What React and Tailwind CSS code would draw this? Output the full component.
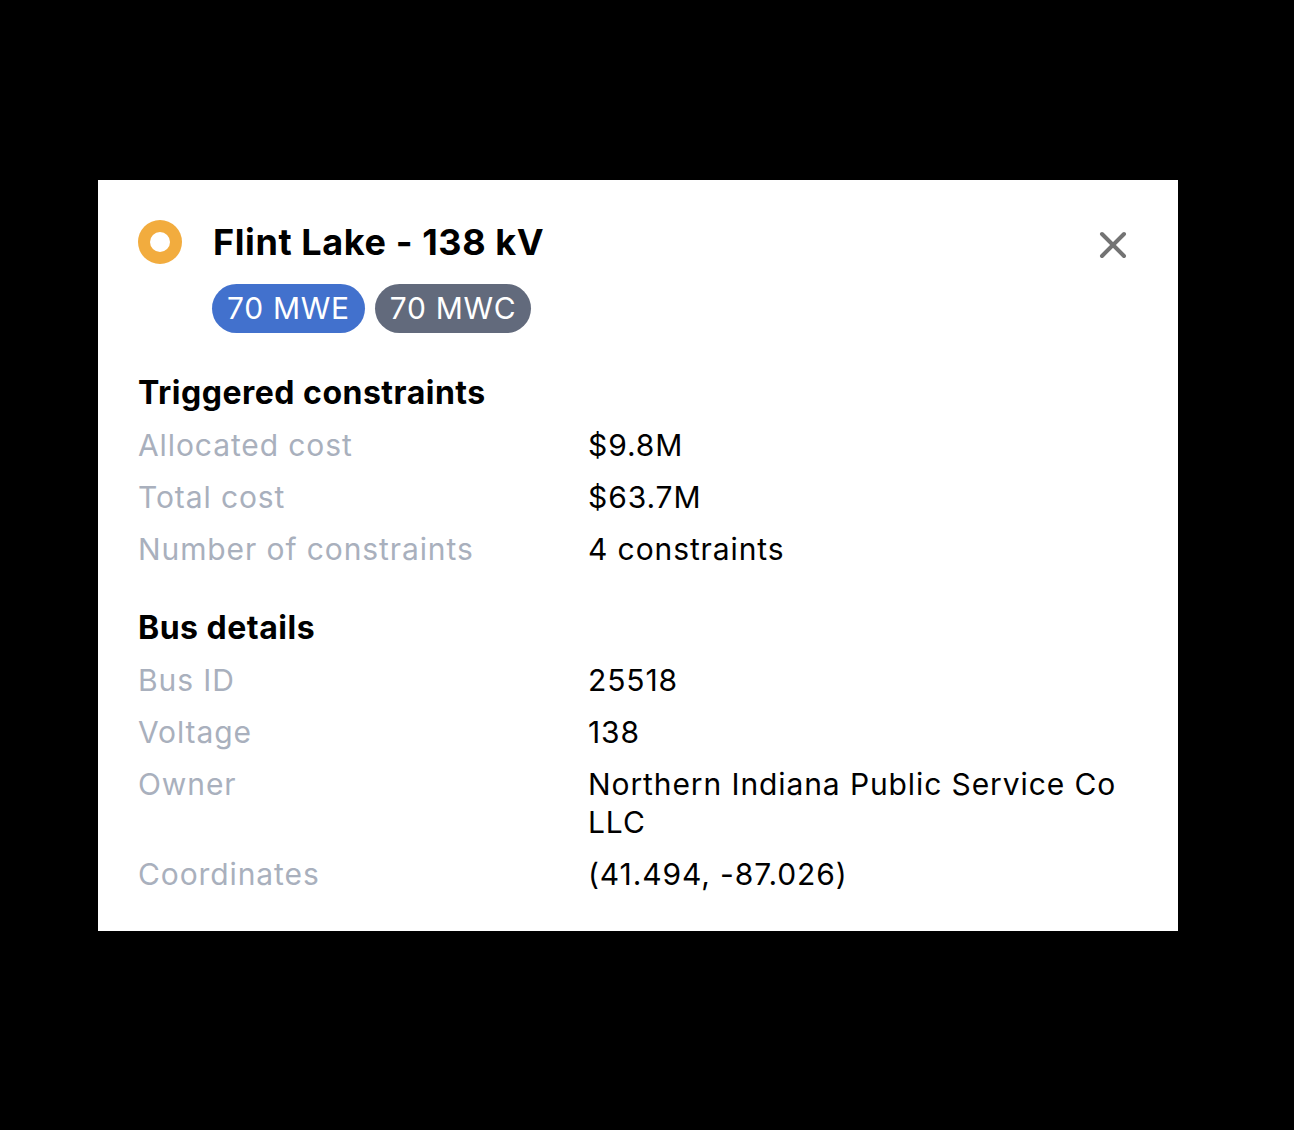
import React from 'react';

const sections = [
  {
    title: 'Triggered constraints',
    rows: [
      ['Allocated cost', '$9.8M'],
      ['Total cost', '$63.7M'],
      ['Number of constraints', '4 constraints'],
    ],
  },
  {
    title: 'Bus details',
    rows: [
      ['Bus ID', '25518'],
      ['Voltage', '138'],
      ['Owner', 'Northern Indiana Public Service Co LLC'],
      ['Coordinates', '(41.494, -87.026)'],
    ],
  },
];

const App = () => {
  return (
    <div
      className="min-h-[1130px] w-full bg-black pl-[98px] pt-[180px]"
      style={{ fontFamily: 'Inter, "Noto Sans", sans-serif' }}
    >
      <div className="w-[1080px] bg-white px-[40px] pt-[40px] pb-[38px]">
        {/* Header */}
        <div className="flex items-start justify-between">
          <div className="flex items-start gap-[31px]">
            <div className="flex h-[44px] w-[44px] items-center justify-center rounded-full bg-[#f2ac3e]">
              <div className="h-[20px] w-[20px] rounded-full bg-white" />
            </div>
            <div className="flex flex-col">
              <h1 className="text-[36px] font-bold leading-[44px] tracking-[0.6px] text-black">
                Flint Lake - 138 kV
              </h1>
              <div className="mt-[20px] -ml-[1px] flex gap-[10px]">
                <span className="rounded-full bg-[#4271cd] px-[15px] text-[30px] leading-[49px] tracking-[0.7px] text-white">
                  70 MWE
                </span>
                <span className="rounded-full bg-[#626a7c] px-[15px] text-[30px] leading-[49px] tracking-[0.7px] text-white">
                  70 MWC
                </span>
              </div>
            </div>
          </div>
          <button type="button" className="mt-[11px] mr-[11px] text-[#737373]">
            <svg width="28" height="28" viewBox="0 0 28 28" fill="none">
              <path
                d="M3 3L25 25M25 3L3 25"
                stroke="currentColor"
                strokeWidth="4"
                strokeLinecap="round"
              />
            </svg>
          </button>
        </div>

        {/* Sections */}
        <div className="mt-[40px] flex flex-col gap-[40px]">
          {sections.map((section) => (
            <div key={section.title} className="flex flex-col gap-[14px]">
              <h2 className="text-[32px] font-bold leading-[39px] tracking-[0.5px] text-black">
                {section.title}
              </h2>
              {section.rows.map(([label, value]) => (
                <div
                  key={label}
                  className="grid grid-cols-[450px_1fr] text-[30px] leading-[38px] tracking-[0.9px]"
                >
                  <span className="text-[#a9b0bd]">{label}</span>
                  <span className="text-black">{value}</span>
                </div>
              ))}
            </div>
          ))}
        </div>
      </div>
    </div>
  );
};

export default App;
